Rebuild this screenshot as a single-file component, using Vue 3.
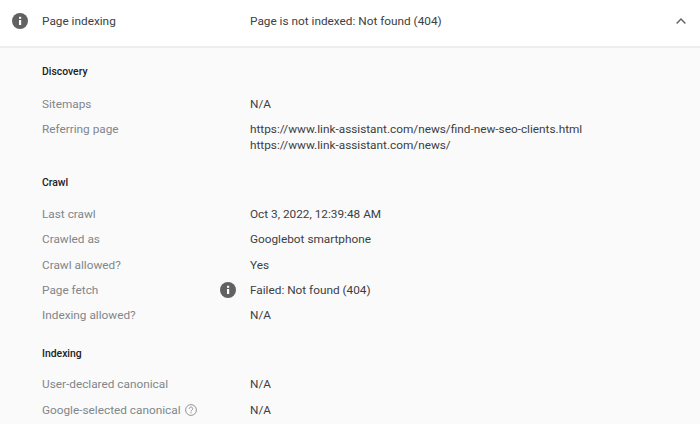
<script setup>
const sections = [
  {
    title: 'Discovery',
    rows: [
      { label: 'Sitemaps', values: ['N/A'] },
      {
        label: 'Referring page',
        values: [
          'https://www.link-assistant.com/news/find-new-seo-clients.html',
          'https://www.link-assistant.com/news/'
        ]
      }
    ]
  },
  {
    title: 'Crawl',
    rows: [
      { label: 'Last crawl', values: ['Oct 3, 2022, 12:39:48 AM'] },
      { label: 'Crawled as', values: ['Googlebot smartphone'] },
      { label: 'Crawl allowed?', values: ['Yes'] },
      { label: 'Page fetch', values: ['Failed: Not found (404)'], info: true },
      { label: 'Indexing allowed?', values: ['N/A'] }
    ]
  },
  {
    title: 'Indexing',
    rows: [
      { label: 'User-declared canonical', values: ['N/A'] },
      { label: 'Google-selected canonical', values: ['N/A'], help: true }
    ]
  }
]
</script>

<template>
  <div class="panel">
    <header class="head">
      <svg class="info-icon" viewBox="0 0 16 16">
        <circle cx="8" cy="8" r="8" fill="#616161" />
        <rect x="7" y="7" width="2.2" height="5" fill="#fff" />
        <rect x="7" y="3.8" width="2.2" height="2" fill="#fff" />
      </svg>
      <span class="head-title">Page indexing</span>
      <span class="head-value">Page is not indexed: Not found (404)</span>
      <svg class="chevron" viewBox="0 0 10 6">
        <path d="M.6 5.4 5 1l4.4 4.4" fill="none" stroke="#5f6368" stroke-width="1.4" />
      </svg>
    </header>
    <div class="body">
      <section v-for="s in sections" :key="s.title" class="section">
        <h3 class="section-title">{{ s.title }}</h3>
        <div v-for="row in s.rows" :key="row.label" class="row">
          <div class="label">
            <span>{{ row.label }}</span>
            <svg v-if="row.help" class="help" viewBox="0 0 12 12">
              <circle cx="6" cy="6" r="5.4" fill="none" stroke="#8a8a8a" stroke-width=".9" />
              <path d="M4.3 4.8a1.7 1.7 0 1 1 2.7 1.3c-.7.4-1 .7-1 1.3" fill="none" stroke="#8a8a8a" stroke-width=".9" />
              <rect x="5.5" y="8.2" width="1" height="1" fill="#8a8a8a" />
            </svg>
            <svg v-if="row.info" class="info-icon row-info" viewBox="0 0 16 16">
              <circle cx="8" cy="8" r="8" fill="#616161" />
              <rect x="7" y="7" width="2.2" height="5" fill="#fff" />
              <rect x="7" y="3.8" width="2.2" height="2" fill="#fff" />
            </svg>
          </div>
          <div class="value">
            <div v-for="v in row.values" :key="v">{{ v }}</div>
          </div>
        </div>
      </section>
    </div>
  </div>
</template>

<style>
html, body {
  margin: 0;
  height: 424px;
  overflow: hidden;
}
</style>

<style scoped>
.panel {
  width: 700px;
  height: 424px;
  overflow: hidden;
  font-family: Roboto, "Liberation Sans", sans-serif;
  font-size: 11.8px;
  color: #3c4043;
  background: #fafafa;
}
.head {
  display: flex;
  align-items: center;
  height: 42px;
  padding: 0 14px 4px 12px;
  background: #fff;
  border-bottom: 2px solid #eeeeee;
}
.info-icon {
  width: 16px;
  height: 16px;
  flex: none;
}
.head-title {
  width: 208px;
  margin-left: 14px;
}
.head-value {
  flex: 1;
}
.chevron {
  width: 10px;
  height: 6px;
  flex: none;
}
.body {
  padding: 15px 0 0 42px;
}
.section {
  padding-bottom: 16.25px;
}
.section-title {
  margin: 0;
  height: 18px;
  line-height: 18px;
  font-size: 10.4px;
  font-weight: 500;
  color: #202124;
}
.row {
  display: flex;
  padding: 4px 0 5.25px;
  line-height: 16px;
}
.section-title + .row {
  margin-top: 9.75px;
}
.section:first-child .section-title + .row {
  margin-top: 10.5px;
}
.label {
  display: flex;
  align-items: center;
  align-self: flex-start;
  width: 208px;
  height: 16px;
  color: #80868b;
}
.help {
  width: 12px;
  height: 12px;
  margin-left: 4px;
}
.row-info {
  margin-left: auto;
  margin-right: 14px;
}
</style>
